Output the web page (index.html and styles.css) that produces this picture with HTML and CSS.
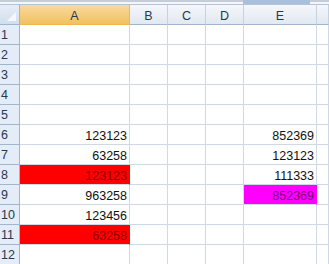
FILE: index.html
```html
<!DOCTYPE html>
<html>
<head>
<meta charset="utf-8">
<link rel="stylesheet" href="styles.css">
</head>
<body>
<div class="topstrip"><div class="tab"></div></div>
<div class="sheet">
  <div class="corner"><span class="tri"></span></div>
  <div class="ch sel">A</div>
  <div class="ch">B</div>
  <div class="ch">C</div>
  <div class="ch">D</div>
  <div class="ch">E</div>
  <div class="ch"></div>

  <div class="rh">1</div><div class="c"></div><div class="c"></div><div class="c"></div><div class="c"></div><div class="c"></div><div class="c"></div>
  <div class="rh">2</div><div class="c"></div><div class="c"></div><div class="c"></div><div class="c"></div><div class="c"></div><div class="c"></div>
  <div class="rh">3</div><div class="c"></div><div class="c"></div><div class="c"></div><div class="c"></div><div class="c"></div><div class="c"></div>
  <div class="rh">4</div><div class="c"></div><div class="c"></div><div class="c"></div><div class="c"></div><div class="c"></div><div class="c"></div>
  <div class="rh">5</div><div class="c"></div><div class="c"></div><div class="c"></div><div class="c"></div><div class="c"></div><div class="c"></div>
  <div class="rh">6</div><div class="c">123123</div><div class="c"></div><div class="c"></div><div class="c"></div><div class="c">852369</div><div class="c"></div>
  <div class="rh">7</div><div class="c">63258</div><div class="c"></div><div class="c"></div><div class="c"></div><div class="c">123123</div><div class="c"></div>
  <div class="rh">8</div><div class="c red">123123</div><div class="c"></div><div class="c"></div><div class="c"></div><div class="c">111333</div><div class="c"></div>
  <div class="rh">9</div><div class="c">963258</div><div class="c"></div><div class="c"></div><div class="c"></div><div class="c mag">852369</div><div class="c"></div>
  <div class="rh">10</div><div class="c">123456</div><div class="c"></div><div class="c"></div><div class="c"></div><div class="c"></div><div class="c"></div>
  <div class="rh">11</div><div class="c red">63258</div><div class="c"></div><div class="c"></div><div class="c"></div><div class="c"></div><div class="c"></div>
  <div class="rh">12</div><div class="c"></div><div class="c"></div><div class="c"></div><div class="c"></div><div class="c"></div><div class="c"></div>
</div>
</body>
</html>
```
FILE: styles.css
```css
html, body {
  margin: 0;
  padding: 0;
  background: #ffffff;
  overflow: hidden;
}
body {
  width: 329px;
  height: 264px;
  font-family: "Liberation Sans", Arial, sans-serif;
}
.topstrip {
  height: 5px;
  box-sizing: border-box;
  background: #f3f6fa;
  border-top: 2px solid #c6cdd6;
  border-bottom: 1px solid #b4c3d6;
  position: relative;
}
.tab {
  position: absolute;
  left: 243px;
  width: 67px;
  top: -2px;
  height: 4px;
  background: #a9c0dc;
}
.sheet {
  display: grid;
  grid-template-columns: 20px 110px 38px 38px 38px 73px 12px;
  grid-auto-rows: 20px;
}
.sheet > div {
  box-sizing: border-box;
}
.corner {
  background: linear-gradient(#e6edf6, #d2deee);
  border-right: 1px solid #9eb6ce;
  border-bottom: 1px solid #9eb6ce;
  position: relative;
}
.tri {
  position: absolute;
  right: 3px;
  bottom: 3px;
  width: 0;
  height: 0;
  border-left: 9px solid transparent;
  border-bottom: 9px solid #f4f7fb;
}
.ch {
  background: linear-gradient(#f4f7fb, #e2e8f1);
  border-right: 1px solid #c5d1df;
  border-bottom: 1px solid #9eb6ce;
  color: #27384f;
  font-size: 12.5px;
  display: flex;
  align-items: center;
  justify-content: center;
  padding-top: 3px;
}
.ch.sel {
  background: linear-gradient(#f9d99f, #f1c15f);
  border-right: 1px solid #f2b64f;
  border-bottom: 1px solid #f2b64f;
}
.rh {
  background: #e4ecf7;
  border-right: 1px solid #9eb6ce;
  border-bottom: 1px solid #9eb6ce;
  color: #27384f;
  font-size: 12.5px;
  display: flex;
  align-items: center;
  padding-left: 1px;
  padding-top: 1px;
}
.c {
  border-right: 1px solid #d0d7e5;
  border-bottom: 1px solid #d0d7e5;
  color: #111111;
  font-size: 12.5px;
  display: flex;
  align-items: flex-end;
  justify-content: flex-end;
  padding-right: 2px;
  padding-bottom: 1px;
}
.c.red {
  background: #ff0000;
  color: #8a0000;
  border-right-color: #ff0000;
}
.c.mag {
  background: #ff00ff;
  color: #7a007a;
  border-right-color: #ff00ff;
}
```
